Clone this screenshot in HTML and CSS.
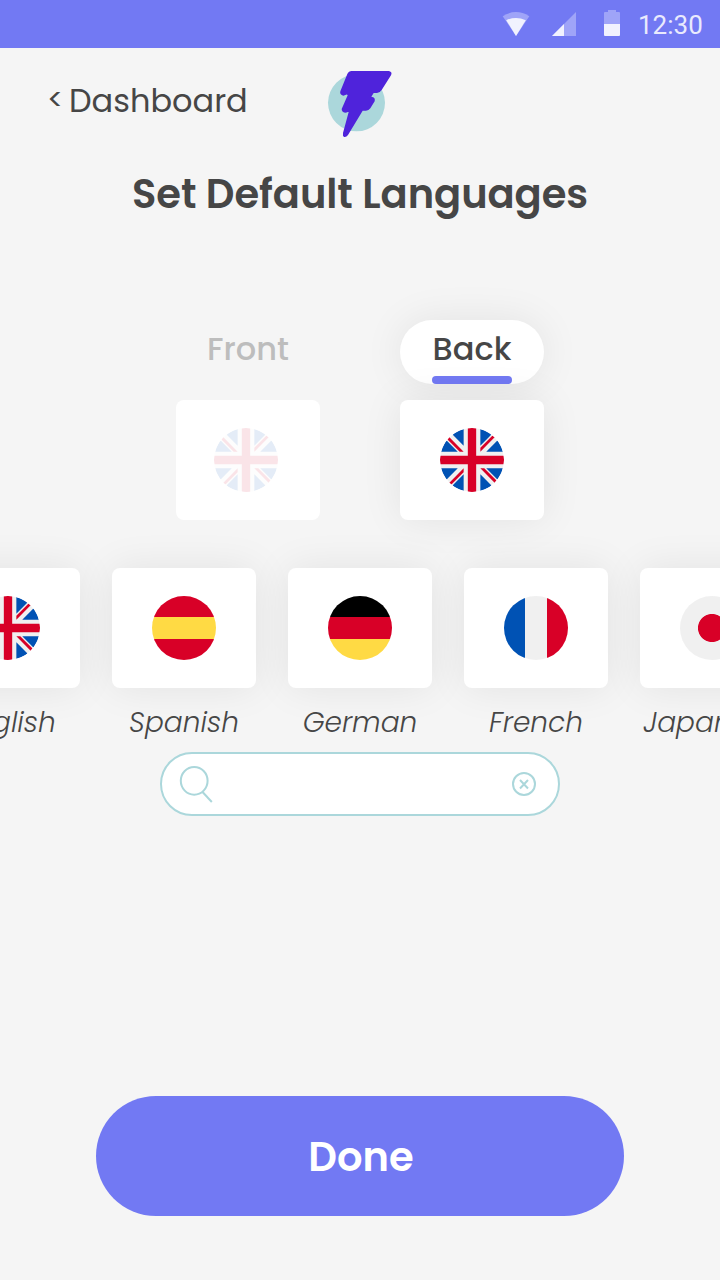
FILE: index.html
```html
<!DOCTYPE html>
<html lang="en">
<head>
<meta charset="utf-8">
<title>Set Default Languages</title>
<link rel="stylesheet" href="styles.css">
</head>
<body>
<svg class="defs" width="0" height="0" aria-hidden="true">
  <symbol id="uk" viewBox="0 0 512 512">
    <circle cx="256" cy="256" r="256" fill="#f0f0f0"/>
    <path fill="#0052b4" d="M52.92 100.142c-20.109 26.163-35.272 56.318-44.101 89.077h133.178zM503.181 189.219c-8.829-32.758-23.993-62.913-44.101-89.076l-89.075 89.076zM8.819 322.784c8.83 32.758 23.993 62.913 44.101 89.075l89.074-89.075zM411.858 52.921c-26.163-20.109-56.317-35.272-89.076-44.102v133.177zM100.142 459.079c26.163 20.109 56.318 35.272 89.076 44.102V370.005zM189.217 8.819c-32.758 8.83-62.913 23.993-89.075 44.101l89.075 89.075zM322.783 503.181c32.758-8.83 62.913-23.993 89.075-44.101l-89.075-89.075zM370.005 322.784l89.075 89.076c20.108-26.162 35.272-56.318 44.101-89.076z"/>
    <path fill="#d80027" d="M509.833 222.609H289.392V2.167a258 258 0 0 0-66.783 0v220.442H2.167a258 258 0 0 0 0 66.782h220.442v220.442a258 258 0 0 0 66.782 0V289.391h220.442a258 258 0 0 0 0-66.782z"/>
    <path fill="#d80027" d="M322.783 322.784L437.019 437.02q7.9-7.9 15.048-16.435l-97.802-97.802zM189.217 322.784L74.98 437.019q7.9 7.9 16.435 15.048l97.802-97.804zM189.217 189.219L74.981 74.98q-7.9 7.9-15.048 16.435l97.803 97.803zM322.783 189.219L437.02 74.981q-7.9-7.9-16.435-15.047l-97.802 97.803z"/>
  </symbol>
</svg>

<header class="status">
  <svg class="status-icons" viewBox="0 0 120 28" aria-hidden="true">
    <path fill="#9fa4f8" d="M.7 6.2Q14 -2 27.3 6.2L14 26z"/>
    <path fill="#f1f2fe" d="M4.2 10.2Q14 5.8 23.8 10.2L14 26z"/>
    <path fill="#9fa4f8" d="M50 26L74 2v24z"/>
    <path fill="#f1f2fe" d="M50 26l12-12v12z"/>
    <path fill="#9fa4f8" d="M106 0h8v2h3a1 1 0 0 1 1 1v11h-16V3a1 1 0 0 1 1-1h3z"/>
    <path fill="#f1f2fe" d="M102 14h16v11a1 1 0 0 1-1 1h-14a1 1 0 0 1-1-1z"/>
  </svg>
  <span class="clock">12:30</span>
</header>

<nav class="topbar">
  <a class="back-link"><span class="chevron">&lt;</span><span class="back-text">Dashboard</span></a>
  <svg class="logo" viewBox="0 0 300 270" aria-hidden="true">
    <circle cx="139.500" cy="128.500" r="85.500" fill="#abd7db"/>
    <path fill="#4f23db" d="M125 33H237Q248 36 243 46L215 90Q209 99 201 99H191L184 110Q197 111 194 124L181 145Q176 152 168 152H158L114 225Q109 232 103 231Q97 228 99 219L116 156Q112 155 108 158Q95 158 95 147L113 106Q112 103 108 104L100 107Q88 104 91 94L112 42Q116 33 125 33Z"/>
  </svg>
</nav>

<h1 class="title"><span>Set Default Languages</span></h1>

<main class="content">
  <section class="sides">
    <div class="side side-front">
      <div class="tab"><span class="tab-text">Front</span></div>
      <div class="card"><svg class="flag"><use href="#uk"/></svg></div>
    </div>
    <div class="side side-back">
      <div class="tab"><span class="tab-text">Back</span></div>
      <div class="card"><svg class="flag"><use href="#uk"/></svg></div>
    </div>
  </section>

  <section class="carousel">
    <div class="lang">
      <div class="card"><svg class="flag"><use href="#uk"/></svg></div>
      <span class="label">English</span>
    </div>
    <div class="lang">
      <div class="card"><div class="flag spain"></div></div>
      <span class="label">Spanish</span>
    </div>
    <div class="lang">
      <div class="card"><div class="flag germany"></div></div>
      <span class="label">German</span>
    </div>
    <div class="lang">
      <div class="card"><div class="flag france"></div></div>
      <span class="label">French</span>
    </div>
    <div class="lang">
      <div class="card"><div class="flag japan"></div></div>
      <span class="label">Japanese</span>
    </div>
  </section>

  <div class="search">
    <svg class="search-icon" viewBox="0 0 36 40" aria-hidden="true">
      <ellipse cx="16.200" cy="16.800" rx="13.400" ry="13.900"/>
      <path d="M24.300 27.800L33.800 38"/>
    </svg>
    <svg class="clear-icon" viewBox="0 0 24 24" aria-hidden="true">
      <circle cx="12" cy="12" r="11"/>
      <path d="M8 8l8 8.500M16 8l-8 8.500"/>
    </svg>
  </div>
</main>

<button class="done"><span>Done</span></button>
</body>
</html>
```
FILE: styles.css
```css
* { box-sizing: border-box; }

body {
  margin: 0;
  width: 720px;
  height: 1280px;
  display: flex;
  flex-direction: column;
  align-items: center;
  overflow: hidden;
  background: #f5f5f5;
  color: #464646;
  font-family: Poppins, Inter, "Open Sans", sans-serif;
}

.defs { display: block; flex: none; }

.status {
  width: 720px;
  height: 48px;
  flex: none;
  display: flex;
  align-items: center;
  justify-content: flex-end;
  padding-right: 17px;
  background: #7279f3;
}
.status-icons { width: 120px; height: 28px; margin-right: 16px; }
.clock {
  padding-top: 2px;
  font: 26px/50px Roboto, sans-serif;
  color: #e9eafd;
  width: 65px;
  white-space: nowrap;
}

.topbar {
  width: 720px;
  height: 102px;
  flex: none;
  display: flex;
  align-items: flex-start;
  padding: 12px 0 0 48px;
}
.back-link {
  width: 262px;
  padding-top: 18px;
  display: flex;
  font-size: 32px;
  line-height: 46px;
}
.chevron { width: 21px; margin-left: -1px; margin-right: 1px; font-size: 30px; line-height: 44px; }
.logo { width: 100px; height: 90px; }

.title {
  margin: 14px 0 0;
  height: 60px;
  font-size: 40px;
  line-height: 60px;
  font-weight: 600;
  letter-spacing: -0.05px;
  white-space: nowrap;
}

.content {
  width: 720px;
  flex: 1;
  display: flex;
  flex-direction: column;
  align-items: center;
  padding-top: 96px;
}

.sides { display: flex; gap: 80px; }
.side { display: flex; flex-direction: column; gap: 16px; }
.tab {
  width: 144px;
  height: 64px;
  display: flex;
  flex-direction: column;
  align-items: center;
  font-size: 32px;
  line-height: 58px;
  font-weight: 500;
}
.card {
  width: 144px;
  height: 120px;
  display: grid;
  place-items: center;
  border-radius: 8px;
  background: #fff;
  box-shadow: 0 0 40px rgba(0, 0, 0, 0.08);
}
.flag { width: 64px; height: 64px; border-radius: 50%; }

.side-front .tab { color: #bdbdbd; }
.side-front .card { box-shadow: none; padding-right: 4px; }
.side-front .flag { opacity: 0.1; }
.side-back .tab {
  border-radius: 32px;
  background: #fff;
  box-shadow: 0 0 40px rgba(0, 0, 0, 0.08);
}
.side-back .tab::after {
  content: "";
  width: 80px;
  height: 8px;
  margin-top: -2px;
  border-radius: 4px;
  background: #7279f3;
}

.carousel {
  display: flex;
  gap: 32px;
  margin-top: 48px;
}
.lang { width: 144px; display: flex; flex-direction: column; align-items: center; }
.label {
  margin-top: 13px;
  font-size: 28px;
  line-height: 44px;
  font-style: italic;
  font-weight: 300;
  white-space: nowrap;
}
.spain { background: linear-gradient(#d80027 21px, #ffda44 21px 43px, #d80027 43px); }
.germany { background: linear-gradient(#000 21px, #d80027 21px 43px, #ffda44 43px); }
.france { background: linear-gradient(90deg, #0052b4 21px, #f0f0f0 21px 43px, #d80027 43px); }
.japan { background: radial-gradient(circle, #d80027 13.600px, #f0f0f0 14.400px); }

.search {
  width: 400px;
  height: 64px;
  margin-top: 7px;
  display: flex;
  align-items: center;
  justify-content: space-between;
  padding: 0 22px 0 16px;
  border: 2px solid #abd7db;
  border-radius: 32px;
  background: #fff;
}
.search svg { fill: none; stroke: #abd7db; stroke-width: 2; }
.search-icon { width: 36px; height: 40px; }
.clear-icon { width: 24px; height: 24px; }

.done {
  width: 528px;
  height: 120px;
  flex: none;
  margin-bottom: 64px;
  padding: 2px 0 0 2px;
  border: 0;
  border-radius: 60px;
  background: #7279f3;
  color: #fff;
  font: inherit;
  font-size: 40px;
  font-weight: 600;
}
```
